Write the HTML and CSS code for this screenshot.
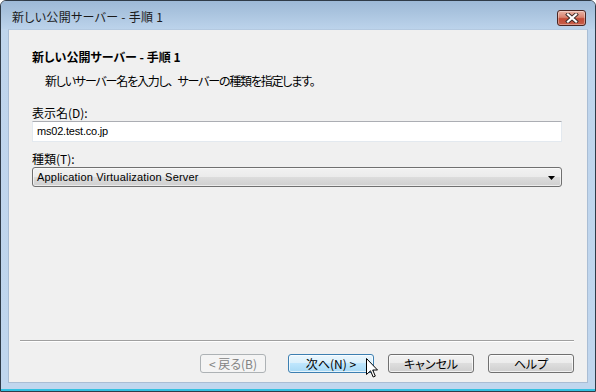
FILE: index.html
```html
<!DOCTYPE html>
<html lang="ja">
<head>
<meta charset="utf-8">
<link rel="stylesheet" href="styles.css">
</head>
<body>
<div class="window">
  <div class="titlebar">
    <span class="title">新しい公開サーバー - 手順 1</span>
    <div class="close">
      <svg width="14" height="10" viewBox="0 0 14 10">
        <path d="M3 1.5 L11 8.5 M11 1.5 L3 8.5" stroke="#3a2a28" stroke-width="4" stroke-linecap="square"/>
        <path d="M3 1.5 L11 8.5 M11 1.5 L3 8.5" stroke="#ffffff" stroke-width="2.2" stroke-linecap="square"/>
      </svg>
    </div>
  </div>
  <div class="client">
    <div class="heading">新しい公開サーバー - 手順 1</div>
    <div class="subtitle">新しいサーバー名を入力し<span class="fullwidth">、</span>サーバーの種類を指定します。</div>
    <div class="form">
      <div class="label">表示名(D):</div>
      <div class="textbox">ms02.test.co.jp</div>
      <div class="label label-second">種類(T):</div>
      <div class="combo">
        <span>Application Virtualization Server</span>
        <svg class="arrow" width="7" height="4" viewBox="0 0 7 4"><path d="M0 0 H7 L3.5 4 Z" fill="#000"/></svg>
      </div>
    </div>
    <div class="footer">
      <div class="sep"></div>
      <div class="buttons">
        <div class="btn btn-back disabled">&lt; 戻る(B)</div>
        <div class="btn btn-default">次へ(N) &gt;</div>
        <div class="btn">キャンセル</div>
        <div class="btn">ヘルプ</div>
      </div>
    </div>
  </div>
  <svg class="cursor" width="12" height="20" viewBox="0 0 12 20">
    <path d="M0.5 0.5 V16.5 L4.5 12.8 L7.2 19 L9.3 18.1 L6.7 12 H11.5 Z" fill="#fff" stroke="#000" stroke-width="1" stroke-linejoin="miter"/>
  </svg>
</div>
</body>
</html>
```

FILE: styles.css
```css
* { box-sizing: border-box; }
html, body { margin: 0; padding: 0; background: #ffffff; }
body {
  font-family: "Noto Sans CJK JP", "Liberation Sans", sans-serif;
  font-size: 12px;
  color: #000;
  font-feature-settings: "palt";
}
.window {
  position: relative;
  width: 596px;
  height: 392px;
  border: 1px solid #2f3b48;
  border-radius: 6px 6px 0 0;
  background: linear-gradient(#bfd5ec, #c0d6ee);
  display: flex;
  flex-direction: column;
  overflow: hidden;
  box-shadow: inset 0 -2px 0 #32c0e0;
}
.titlebar {
  height: 28px;
  flex: none;
  display: flex;
  align-items: center;
  justify-content: space-between;
  padding: 0 9px 0 11px;
  background: linear-gradient(#9db9d7 0%, #a9c3de 40%, #bcd3eb 100%);
}
.title {
  font-size: 12px;
  line-height: 14px;
  margin-top: 4px;
  color: #1a1a1a;
  letter-spacing: 0.3px;
}
.close {
  width: 29px;
  height: 16px;
  margin-top: 6px;
  border: 1px solid #4b2622;
  border-radius: 3px;
  background: linear-gradient(#e9b4a6 0%, #d98370 45%, #c24a35 55%, #c8604b 100%);
  display: flex;
  align-items: center;
  justify-content: center;
  box-shadow: inset 0 0 0 1px rgba(255,255,255,0.35);
}
.client {
  margin: 0 7px;
  height: 354px;
  flex: none;
  background: #f0f0f0;
  display: flex;
  flex-direction: column;
  padding: 20px 25px 0 23px;
  border: 1px solid #a9bdd4;
  border-top-color: #b4c9e0;
}
.heading {
  font-weight: bold;
  line-height: 16px;
  margin-top: -1px;
}
.subtitle {
  line-height: 16px;
  margin: 8px 0 0 13px;
  letter-spacing: -1.2px;
}
.fullwidth {
  font-feature-settings: normal;
  letter-spacing: -2px;
}
.form {
  display: flex;
  flex-direction: column;
  margin-top: 17px;
}
.label {
  line-height: 14px;
}
.label-second { margin-top: 10px; }
.textbox {
  margin-top: 1px;
  height: 21px;
  background: #fff;
  border: 1px solid #e3e9ef;
  border-top-color: #abadb3;
  padding: 0 4px;
  line-height: 19px;
  font-family: "Liberation Sans", sans-serif;
  font-size: 11px;
  letter-spacing: -0.2px;
}
.combo {
  margin-top: 1px;
  height: 20px;
  border: 1px solid #707070;
  border-radius: 3px;
  background: linear-gradient(#f2f2f2 0%, #ebebeb 50%, #dddddd 50%, #cfcfcf 100%);
  display: flex;
  align-items: center;
  justify-content: space-between;
  padding: 0 4px 0 4px;
  font-family: "Liberation Sans", sans-serif;
  font-size: 11px;
  letter-spacing: 0.2px;
  box-shadow: inset 0 0 0 1px rgba(255,255,255,0.6);
}
.combo .arrow { margin-right: 2px; margin-top: 1px; }
.footer {
  margin-top: auto;
  margin-left: -12px;
  margin-right: -12px;
  padding-bottom: 9px;
  display: flex;
  flex-direction: column;
}
.sep {
  height: 2px;
  border-top: 1px solid #a0a0a0;
  border-bottom: 1px solid #ffffff;
}
.buttons {
  margin-top: 12px;
  display: flex;
  justify-content: flex-end;
  gap: 14px;
}
.btn {
  width: 86px;
  height: 19px;
  border: 1px solid #707070;
  border-radius: 3px;
  background: linear-gradient(#f2f2f2 0%, #ebebeb 50%, #dddddd 50%, #cfcfcf 100%);
  box-shadow: inset 0 0 0 1px rgba(255,255,255,0.7);
  display: flex;
  align-items: center;
  justify-content: center;
  font-size: 12px;
  line-height: 14px;
}
.btn-back {
  width: 66px;
  margin-right: 8px;
}
.disabled {
  border-color: #adb2b5;
  background: #f4f4f4;
  color: #838383;
  box-shadow: none;
}
.btn-default {
  border-color: #3c7fb1;
  background: linear-gradient(#eaf6fd 0%, #d9f0fc 50%, #bee6fd 50%, #a7d9f5 100%);
}
.cursor {
  position: absolute;
  left: 365px;
  top: 357px;
}
```
